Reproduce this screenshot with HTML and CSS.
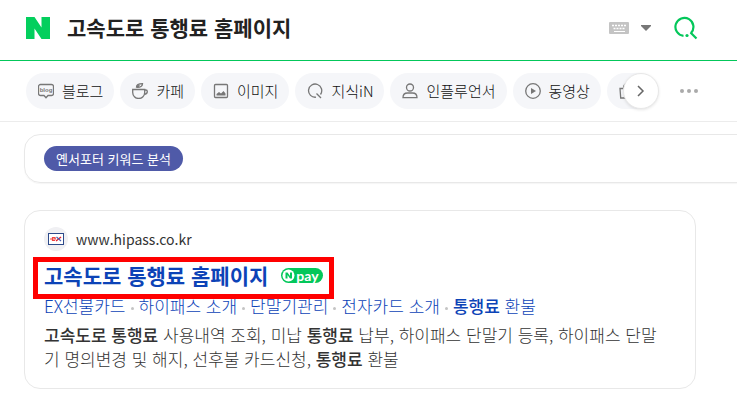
FILE: index.html
```
<!DOCTYPE html>
<html lang="ko">
<head>
  <meta charset="UTF-8">
  <meta name="viewport" content="width=device-width, initial-scale=1.0">
  <title>고속도로 통행료 홈페이지</title>
  <link rel="stylesheet" href="styles.css">
</head>
<body>
  <header class="header">
    <a class="logo" href="#" aria-label="NAVER">
      <svg width="24" height="22" viewBox="0 0 24 22"><path fill="#03cf5d" d="M0 0h8.500l7 10.500V0H24v22h-8.500l-7-10.500V22H0z"/></svg>
    </a>
    <input class="search-input" type="text" value="고속도로 통행료 홈페이지" aria-label="검색어">
    <button class="icon-btn keyboard" type="button" aria-label="입력기">
      <svg width="20" height="12" viewBox="0 0 20 12">
        <rect width="20" height="12" rx="1" fill="#c4c4c4"/>
        <path d="M3 3.500h14M4.500 6.500h11" stroke="#fff" stroke-width="1.500" stroke-dasharray="2 1" fill="none"/>
        <path d="M5 9.500h11" stroke="#fff" fill="none"/>
      </svg>
    </button>
    <button class="icon-btn arrow" type="button" aria-label="자동완성">
      <svg width="10" height="6" viewBox="0 0 10 6"><path d="M0 0h10v1L5 6 0 1z" fill="#777"/></svg>
    </button>
    <button class="icon-btn search" type="button" aria-label="검색">
      <svg width="24" height="24" viewBox="0 0 24 24" fill="none" stroke="#03c75a" stroke-width="2.200">
        <path d="M9.500 19.800A9 9 0 1 1 17 17"/>
        <path d="M16.500 16.500l6 6"/>
        <circle cx="13" cy="19.500" r="1.600" fill="#03c75a" stroke="none"/>
      </svg>
    </button>
  </header>

  <nav class="nav">
    <div class="tabs">
      <a class="tab" href="#">
        <svg class="tab-icon" viewBox="0 0 16 16"><path d="M2.500 1.500h11a2 2 0 0 1 2 2v7a2 2 0 0 1-2 2H10L8 14.700 6 12.500H2.500a2 2 0 0 1-2-2v-7a2 2 0 0 1 2-2z"/><text class="blog-text" x="8" y="9" text-anchor="middle">blog</text></svg>
        블로그
      </a>
      <a class="tab" href="#">
        <svg class="tab-icon" viewBox="0 0 16 16"><path d="M.7 6.500h12V9.500a6 6 0 0 1-12 0zM12.700 7h1a1.600 1.600 0 0 1 1.600 1.600c0 1.700-1 2.700-3 2.700M4.500 4.200c0-2.200 1.500-3.500 6-3.500C10.500 3.200 8.500 4.500 4.500 4.200zl3-2"/></svg>
        카페
      </a>
      <a class="tab" href="#">
        <svg class="tab-icon" viewBox="0 0 16 16"><rect x="1.500" y="1.500" width="13" height="13" rx="1"/><path class="solid" d="M3.500 12.500v-1.500L6 9l2 1.500L10.500 8l2 2.500v2z"/></svg>
        이미지
      </a>
      <a class="tab" href="#">
        <svg class="tab-icon" viewBox="0 0 16 16"><path d="M9 14.200A6.600 6.600 0 1 1 13.500 11.500M9.500 10.500l4.500 4.500"/></svg>
        지식iN
      </a>
      <a class="tab" href="#">
        <svg class="tab-icon" viewBox="0 0 16 16"><circle cx="8" cy="4.500" r="3.500"/><path d="M1 14.700c0-3 2-4.700 4.500-4.700h5c2.500 0 4.500 1.700 4.500 4.700z"/></svg>
        인플루언서
      </a>
      <a class="tab" href="#">
        <svg class="tab-icon" viewBox="0 0 16 16"><circle cx="8" cy="8" r="7.300"/><path class="solid" d="M6 5l5 3-5 3z"/></svg>
        동영상
      </a>
      <a class="tab tab-last" href="#" aria-label="쇼핑">
        <svg class="tab-icon" viewBox="0 0 16 16"><path d="M1 5.500h14l-1 9.500H1.700zM4.500 5.500c0-3 1-4.500 3.500-4.500s3.500 1.500 3.500 4.500"/></svg>
      </a>
    </div>
    <button class="next" type="button" aria-label="다음">
      <svg width="8" height="14" viewBox="0 0 8 14"><path d="M1 2l5 5-5 5" fill="none" stroke="#666" stroke-width="1.500"/></svg>
    </button>
    <button class="icon-btn more" type="button" aria-label="더보기">
      <svg width="18" height="4" viewBox="0 0 18 4" fill="#aaa"><circle cx="2" cy="2" r="2"/><circle cx="9" cy="2" r="2"/><circle cx="16" cy="2" r="2"/></svg>
    </button>
  </nav>

  <main class="content">
    <section class="card keyword-card">
      <button class="keyword-btn" type="button">옌서포터 키워드 분석</button>
    </section>

    <section class="card result">
      <a class="site" href="#">
        <span class="favicon">
          <svg width="16" height="12" viewBox="0 0 16 12"><rect x=".5" y=".5" width="15" height="11" fill="#fff" stroke="#2d4a8a"/><path d="M2 6h6M7 7.500H4.500V4.500H7V6" stroke="#f04540" stroke-width="1.200" fill="none"/><path d="M8 8l5-4" stroke="#e02030" stroke-width="1.400"/><path d="M8.500 4l4.500 4" stroke="#4a5fb0" stroke-width="1.200"/></svg>
        </span>
        <span class="url">www.hipass.co.kr</span>
      </a>
      <h2 class="title">
        <a href="#">고속도로 통행료 홈페이지</a>
        <span class="npay">
          <svg width="13" height="13" viewBox="0 0 13 13"><circle cx="6.500" cy="6.500" r="6" fill="#fff"/><path d="M3.500 9.500v-6h2l2.500 3.500V3.500h2v6H8L5.500 6v3.500z" fill="#03c75a"/></svg>
          pay
        </span>
      </h2>
      <div class="links">
        <a href="#">EX선불카드</a>
        <a href="#">하이패스 소개</a>
        <a href="#">단말기관리</a>
        <a href="#">전자카드 소개</a>
        <a href="#"><b>통행료</b> 환불</a>
      </div>
      <p class="desc"><b>고속도로 통행료</b> 사용내역 조회, 미납 <b>통행료</b> 납부, 하이패스 단말기 등록, 하이패스 단말기 명의변경 및 해지, 선후불 카드신청, <b>통행료</b> 환불</p>
    </section>
  </main>
</body>
</html>
```
FILE: styles.css
```
* {
  box-sizing: border-box;
}
body {
  margin: 0;
  background: #fff;
  color: #333;
  font-family: "Noto Sans CJK KR", sans-serif;
  overflow-x: hidden;
}
a {
  color: inherit;
  text-decoration: none;
}
button, input {
  font-family: inherit;
  border: 0;
  padding: 0;
  background: none;
}
svg {
  display: block;
  flex: none;
}
.icon-btn {
  cursor: pointer;
}

/* header */
.header {
  display: flex;
  align-items: center;
  height: 61px;
  padding: 0 39px 4px 26px;
  border-bottom: 1px solid #03c75a;
}
.search-input {
  flex: 1;
  min-width: 0;
  margin-left: 17px;
  padding-bottom: 2px;
  font-size: 21px;
  font-weight: 700;
  color: #222;
  outline: none;
}
.arrow {
  margin-left: 12px;
}
.search {
  margin-left: 23px;
}

/* tabs */
.nav {
  display: flex;
  align-items: center;
  height: 61px;
  padding: 0 39px 0 26px;
  border-bottom: 1px solid #ececec;
}
.tabs {
  display: flex;
  flex: 1;
  gap: 6px;
  min-width: 0;
  overflow: hidden;
}
.tab {
  display: flex;
  flex: none;
  align-items: center;
  gap: 8px;
  height: 36px;
  padding: 0 11px 0 12px;
  border-radius: 18px;
  background: #f5f6f9;
  color: #111;
  font-size: 15px;
  font-weight: 300;
  line-height: 34px;
  white-space: nowrap;
}
.tab-last {
  min-width: 76px;
}
.tab-icon {
  width: 16px;
  height: 16px;
  fill: none;
  stroke: #777;
  stroke-width: 1.3;
}
.tab-icon .solid {
  fill: #777;
  stroke: none;
}
.tab-icon .blog-text {
  font: 700 6px "Liberation Sans", sans-serif;
  fill: #777;
  stroke: none;
}
.next {
  display: flex;
  flex: none;
  align-items: center;
  justify-content: center;
  width: 36px;
  height: 36px;
  margin-left: -18px;
  border: 1px solid #e8e8e8;
  border-radius: 50%;
  background: #fff;
  box-shadow: 0 1px 3px rgba(0, 0, 0, 0.1);
  z-index: 1;
}
.more {
  margin-left: 21px;
}

/* results */
.content {
  padding: 12px 0 14px 24px;
}
.card {
  border: 1px solid #e8e8e8;
  border-radius: 16px;
}
.keyword-card {
  display: flex;
  margin-right: -16px;
  padding: 11px 19px;
  box-shadow: 0 1px 1px rgba(0, 0, 0, 0.04);
}
.keyword-btn {
  height: 25px;
  padding: 0 12px;
  border-radius: 13px;
  background: #4f5aa8;
  color: #fff;
  font-size: 13px;
  line-height: 24px;
}
.result {
  margin: 27px 41px 0 0;
  padding: 16px 27px 17px 19px;
}
.site {
  display: flex;
  align-items: center;
  gap: 8px;
}
.favicon {
  display: flex;
  align-items: center;
  justify-content: center;
  width: 24px;
  height: 24px;
  border-radius: 50%;
  background: #f0f0f3;
}
.url {
  font-size: 14px;
  line-height: 24px;
}
.title {
  position: relative;
  display: flex;
  align-items: center;
  gap: 13px;
  width: fit-content;
  margin: 9px 0 0;
  color: #0c43b7;
  font-size: 21px;
  font-weight: 700;
  line-height: 30px;
}
/* red highlight frame round the title */
.title::after {
  content: "";
  position: absolute;
  inset: -3px -11px -9px;
  border: 5px solid #f00;
  pointer-events: none;
}
.npay {
  display: flex;
  align-items: center;
  gap: 1px;
  height: 15px;
  padding: 0 4px 0 1px;
  border-radius: 8px;
  background: #03c75a;
  color: #fff;
  font: 700 14px/13px "Lato", sans-serif;
}
.links {
  display: flex;
  flex-wrap: wrap;
  color: #0c43b7;
  font-size: 17px;
  font-weight: 300;
  line-height: 24px;
  margin-top: 4px;
}
.links a + a::before {
  content: "";
  display: inline-block;
  width: 3px;
  height: 3px;
  margin: 0 5px 3px 5px;
  border-radius: 50%;
  background: #c4c4c4;
}
.links b, .desc b {
  font-weight: 500;
}
.desc {
  margin: 5px 0 0;
  font-size: 17px;
  font-weight: 300;
  line-height: 24px;
}
```
